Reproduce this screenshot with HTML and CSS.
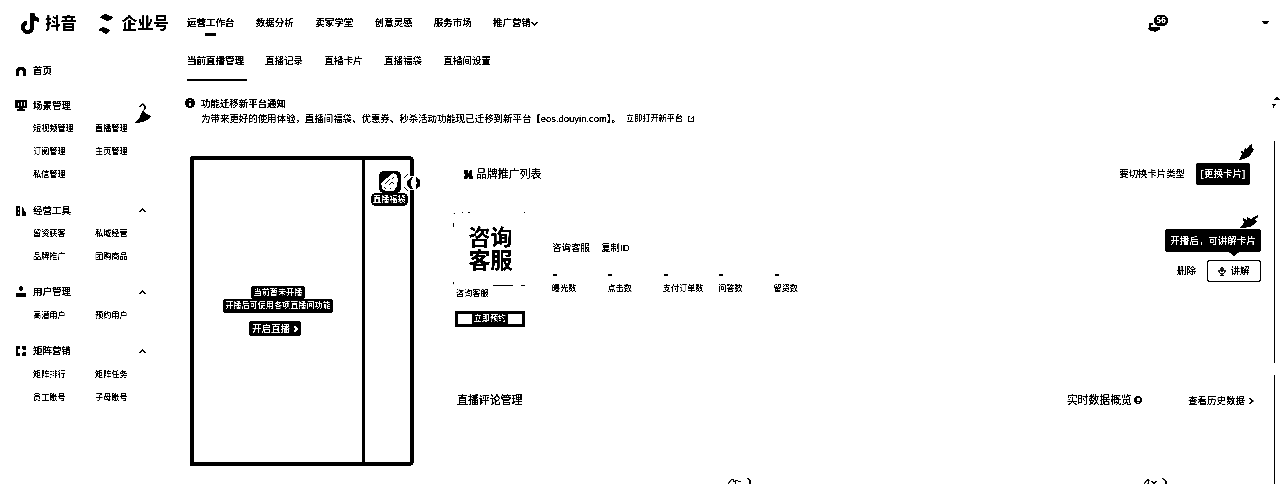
FILE: index.html
```html
<!DOCTYPE html>
<html lang="zh-CN">
<head>
<meta charset="utf-8">
<title>抖音企业号</title>
<link rel="stylesheet" href="styles.css">
</head>
<body>
<div class="app">
  <header class="header">
    <div class="brand">
      <svg class="brand-note" viewBox="0 0 19 22"><path d="M10 0h4c.3 3 2 5 5 5.300v3.700c-2 0-3.700-.6-5-1.500v7.500a7 7 0 1 1-8-7v4a3 3 0 1 0 4 3z"/></svg>
      <span class="brand-name">抖音</span>
      <svg class="brand-mark" viewBox="0 0 16 20"><path d="M2 3 7 0l8 3-1 2-5 2-6-3zM0 16l5-3 7 3-1 2-3 2-5-3z"/></svg>
      <span class="brand-name">企业号</span>
    </div>
    <nav class="nav">
      <a class="nav-item nav-active">运营工作台</a><a class="nav-item">数据分析</a><a class="nav-item">卖家学堂</a><a class="nav-item">创意灵感</a><a class="nav-item">服务市场</a><a class="nav-item">推广营销<svg class="nav-arrow" viewBox="0 0 7 5"><path d="m.5 1 3 3 3-3"/></svg></a>
    </nav>
    <div class="bell">
      <svg class="bell-icon" viewBox="0 0 12 10"><path d="M1 1h4v2H3v2h9v3h-2l-1 1H8L7 10 5 9H3L0 7l1-2z"/></svg>
      <span class="bell-count">56</span>
    </div>
    <svg class="account-arrow" viewBox="0 0 7 4"><path d="M0 0h7L5 3H2z"/></svg>
  </header>
  <div class="layout">
    <aside class="sidebar">
      <div class="group group-home">
        <div class="group-title"><svg class="side-icon" viewBox="0 0 12 12"><path d="M1 11V5l3-3h4l3 3v6H8V6L7 5H5L4 6v5z"/></svg>首页</div>
      </div>
      <div class="group">
        <div class="group-title"><svg class="side-icon" viewBox="0 0 12 12"><path d="M0 0h12v8H8v1h2v2H2V9h2V8H0z"/><path class="cut" d="M3.500 3v3M6.500 2v4M9.500 2v4"/></svg>场景管理</div>
        <div class="links"><a>短视频管理</a><a>直播管理</a><a>订阅管理</a><a>主页管理</a><a>私信管理</a></div>
        <svg class="pointer pointer-side" viewBox="0 0 16 22"><path d="m0 21 4-4 4-9 3 4 5 2-2 3-6 3z"/><path class="line" d="M5 5V4l3-2 2 2v2l-1 2"/></svg>
      </div>
      <div class="group">
        <div class="group-title"><svg class="side-icon" viewBox="0 0 12 12"><path d="M1 1h4v10H1zM7 2h1l1 4 2 2v3H7z"/><path class="cut" d="M3.500 3v2M3.500 7v2"/></svg>经营工具<svg class="fold" viewBox="0 0 7 5"><path d="m.5 4 3-3 3 3"/></svg></div>
        <div class="links"><a>留资获客</a><a>私域经营</a><a>品牌推广</a><a>团购商品</a></div>
      </div>
      <div class="group">
        <div class="group-title"><svg class="side-icon" viewBox="0 0 12 12"><circle cx="6" cy="2.500" r="2.200"/><path d="M1 7h10v4H1z"/></svg>用户管理<svg class="fold" viewBox="0 0 7 5"><path d="m.5 4 3-3 3 3"/></svg></div>
        <div class="links"><a>高潜用户</a><a>预约用户</a></div>
      </div>
      <div class="group">
        <div class="group-title"><svg class="side-icon" viewBox="0 0 12 12"><path d="M1 1h4v3H3v4h2v3H1zM7 1h4v4H8V4H7zM7 8h1V7h3v4H7z"/></svg>矩阵营销<svg class="fold" viewBox="0 0 7 5"><path d="m.5 4 3-3 3 3"/></svg></div>
        <div class="links"><a>矩阵排行</a><a>矩阵任务</a><a>员工账号</a><a>子母账号</a></div>
      </div>
    </aside>
    <main class="main">
      <div class="tabs"><a class="tab tab-active">当前直播管理</a><a class="tab">直播记录</a><a class="tab">直播卡片</a><a class="tab">直播福袋</a><a class="tab">直播间设置</a></div>
      <section class="notice">
        <svg class="notice-icon" viewBox="0 0 10 10"><circle cx="5" cy="5" r="5"/><path class="cut" d="M5 2v1.500M5 4.500V8"/></svg>
        <div>
          <div class="notice-line notice-title">功能迁移新平台通知</div>
          <div class="notice-line">为带来更好的使用体验，直播间福袋、优惠券、秒杀活动功能现已迁移到新平台【eos.douyin.com】。<a class="notice-link">立即打开新平台</a><svg class="external" viewBox="0 0 8 8"><path d="M3 1.500H1.500v5h5V4M4 4l2.500-2.500V4"/></svg></div>
        </div>
      </section>
      <div class="content">
        <section class="phone">
          <div class="screen">
            <p class="halo">当前暂未开播</p>
            <p class="halo halo-wide">开播后可使用各项直播间功能</p>
            <p class="halo halo-button">开启直播<svg class="go" viewBox="0 0 5 8"><path d="m1 1 3 3-3 3"/></svg></p>
          </div>
          <div class="rail">
            <svg class="avatar" viewBox="0 0 22 22"><rect width="22" height="22" rx="5"/><path class="face" d="m2 12 7-6 5-4 4 2 1 5-1 6-3 5H7l-4-2z"/><path class="line thin" d="m6 13 5-5M10 14l3-3 2 2M5 16l2 2M11 17l1 1M13 8l2-2"/></svg>
            <span class="halo rail-label">直播福袋</span>
          </div>
          <svg class="knob" viewBox="0 0 17 20"><path class="blank" d="M6 3h6v14H6z"/><path class="line thin" d="M5 1 1 5M1 14l4 4"/><path d="M9 4 4.500 7.500v5L8 16h2l-2-4V8l2-4zM13 4l4 3v6l-4 3v-4l1-2-1-2z"/></svg>
        </section>
        <div class="panels">
          <section class="panel promo">
            <div class="promo-head">
              <svg class="promo-icon" viewBox="0 0 8 9"><path d="M0 0h4v5l2-5h2v6l1 1v2H5V6L3 9H0V7l2-2-2-2z"/></svg>
              <h2 class="title">品牌推广列表</h2>
              <span class="switch-text">要切换卡片类型</span>
              <span class="switch-button">更换卡片</span>
              <svg class="pointer pointer-top" viewBox="0 0 15 17"><path d="m0 16 3-6-1-3 3 1 1-4 2 1 3-4 2-1v4l2 1-3 5-3 3-5 2z"/></svg>
            </div>
            <div class="product">
              <div class="product-left">
                <div class="cover">咨询<br>客服</div>
                <div class="cover-name">咨询客服</div>
                <div class="reserve"><span>立即预约</span></div>
              </div>
              <div class="product-info">
                <div class="product-name"><span>咨询客服</span><span>复制ID</span></div>
                <div class="stats">
                  <div class="stat"><b></b>曝光数</div><div class="stat"><b></b>点击数</div><div class="stat"><b></b>支付订单数</div><div class="stat"><b></b>问答数</div><div class="stat"><b></b>留资数</div>
                </div>
              </div>
              <div class="actions">
                <span>删除</span>
                <span class="explain"><svg class="mic" viewBox="0 0 8 10"><path d="M3 5V1.500h2V5zM1 4v2l2 2h2l2-2V4M2 9.500h4"/></svg>讲解</span>
                <span class="tip">开播后，可讲解卡片</span>
                <svg class="pointer pointer-tip" viewBox="0 0 18 14"><path d="m0 13 4-5-1-5 4 2V2l4 2 7-4v2l-4 3 3 1-4 4-3 2z"/></svg>
              </div>
            </div>
          </section>
          <section class="panel lower">
            <h2 class="title title-strong">直播评论管理</h2>
            <h2 class="title data-title">实时数据概览</h2>
            <svg class="help" viewBox="0 0 8 8"><circle cx="4" cy="4" r="3.800"/><path class="cut" d="M3 2.500h2.500V4H4v1M4 6v1"/></svg>
            <a class="history">查看历史数据<svg class="more" viewBox="0 0 5 8"><path d="m.5 1 3.500 3-3.500 3"/></svg></a>
            <svg class="empty empty-left" viewBox="0 0 24 8"><path d="m1 7 3-4 2-1 1 3 3-2 2 2 2-1M8 7l1-2M20 1l3 2v5"/></svg>
            <svg class="empty empty-right" viewBox="0 0 24 8"><path d="m1 7 3-4 2 0-1 4M8 4l3 2 3-2M11 6v2M19 1l4 3v4"/></svg>
          </section>
        </div>
      </div>
      <svg class="sort" viewBox="0 0 8 12"><path d="m2 3 3-3 3 3zM0 7h4L2 9v2H1V9z"/></svg>
    </main>
  </div>
</div>
</body>
</html>
```
FILE: styles.css
```css
* { box-sizing: border-box; }
html { background: #fff; }
body { margin: 0; width: 1280px; height: 484px; overflow: hidden; background: #fff; }
svg { display: block; flex: none; overflow: visible; }
p, h2 { margin: 0; font-weight: 400; }
.app {
  width: 1280px; height: 484px; overflow: hidden;
  background: #fff; color: #000;
  font: 9.5px/12px "Liberation Sans", "Noto Sans CJK SC", sans-serif;
  white-space: nowrap;
  filter: grayscale(1) brightness(.78) contrast(12);
}
.line { fill: none; stroke: #000; stroke-width: 1.2; }
.cut { fill: none; stroke: #fff; stroke-width: 1.7; }
.thin { stroke-width: 1; }
.blank { fill: #fff; }

.header { display: flex; align-items: center; height: 46px; padding-left: 21px; position: relative; }
.brand { display: flex; align-items: center; width: 166px; font-size: 15.8px; line-height: 24px; font-weight: 700; color: #222; padding-top: 1px; }
.brand-note { width: 18px; height: 21px; margin-right: 6px; }
.brand-name { flex: none; }
.brand-mark { width: 16px; height: 20px; margin: 0 8px 0 21px; }
.nav { display: flex; gap: 21.3px; height: 46px; align-items: center; font-weight: 500; }
.nav-item { display: flex; align-items: center; position: relative; }
.nav-active { font-weight: 700; }
.nav-active::after { content: ""; position: absolute; left: 18px; top: 16px; width: 11px; height: 3px; border-radius: 1px; background: #000; }
.nav-arrow { width: 7px; height: 5px; }
.nav-arrow path, .fold path, .more path { fill: none; stroke: #000; stroke-width: 1.2; }
.bell { position: relative; margin-left: auto; width: 20px; height: 17px; padding-top: 7px; }
.bell-icon { width: 12px; height: 10px; }
.bell-count { position: absolute; left: 6px; top: 0; width: 14px; height: 11px; border-radius: 6px; background: #000; color: #fff; font-size: 9px; line-height: 11px; font-weight: 700; text-align: center; }
.account-arrow { width: 7px; height: 4px; margin: 0 11px 0 94px; }

.layout { display: flex; }
.sidebar { width: 187px; padding: 13px 0 0 15px; }
.group { position: relative; margin-bottom: 12.2px; }
.group-home { margin-bottom: 11px; }
.group-title { display: flex; align-items: center; height: 24px; width: 131px; font-weight: 500; }
.side-icon { width: 12px; height: 12px; margin-right: 6px; }
.fold { width: 7px; height: 5px; margin-left: auto; }
.links { display: grid; grid-template-columns: 62px 62px; grid-auto-rows: 22.8px; align-items: center; padding-left: 18px; font-size: 8.15px; }
.pointer { position: absolute; }
.pointer-side { left: 120px; top: 8px; width: 16px; height: 22px; }

.main { flex: 1; position: relative; min-width: 0; }
.tabs { display: flex; gap: 21.500px; height: 35px; padding-top: 9px; }
.tab { height: 26px; }
.tab-active { width: 60px; margin-right: -3.500px; border-bottom: 2px solid #000; font-weight: 700; }
.notice { display: flex; align-items: flex-start; gap: 6px; padding-top: 15px; margin-left: -2px; height: 75px; }
.notice-icon { width: 10px; height: 10px; margin-top: 2px; }
.notice-line { display: flex; align-items: center; height: 15px; font-size: 9.45px; }
.notice-title { font-weight: 500; }
.notice-link { font-size: 8.15px; margin-left: 5px; }
.external { width: 8px; height: 8px; margin-left: 4px; }
.external path, .mic path, .empty path { fill: none; stroke: #000; stroke-width: 1; }
.mic path { stroke-width: .8; }
.sort { position: absolute; right: 0; top: 51px; width: 8px; height: 12px; }

.content { display: flex; gap: 39px; height: 328px; margin-top: -15px; padding-left: 3px; }
.phone { position: relative; display: flex; width: 224px; height: 310px; margin-top: 15px; border: 4px solid #000; border-radius: 3px 5px 5px 0; }
.screen { width: 168px; display: flex; flex-direction: column; align-items: center; padding-top: 126px; }
.halo { background: #000; color: #fff; border-radius: 3px; font-size: 8.15px; line-height: 13px; padding: 0 3px; font-weight: 700; }
.halo-wide { line-height: 14px; padding: 0 2px; }
.halo-button { display: flex; align-items: center; gap: 3px; margin: 8px 6px 0 0; font-size: 9.5px; line-height: 15px; }
.go { width: 5px; height: 8px; }
.go path { fill: none; stroke: #fff; stroke-width: 2; }
.rail { display: flex; flex-direction: column; align-items: center; flex: 1; border-left: 3px solid #000; padding: 11px 0 0 4px; }
.avatar { width: 22px; height: 22px; }
.face { fill: #fff; }
.rail-label { width: 37px; height: 13px; border-radius: 5px; padding: 0 2px; }
.knob { position: absolute; right: -10px; top: 13px; width: 17px; height: 20px; }

.panels { flex: 1; display: flex; flex-direction: column; gap: 12px; min-width: 0; height: 343px; padding-right: 5px; }
.panel { border-right: 1px solid #000; position: relative; }
.promo { height: 222px; }
.title { font-size: 10.9px; line-height: 16px; }
.title-strong { font-weight: 500; }
.promo-head { position: relative; display: flex; align-items: center; height: 22px; margin-top: 22px; padding: 0 24px 0 11px; }
.promo-icon { width: 8px; height: 9px; margin-right: 4px; }
.switch-text { margin-left: auto; margin-right: 11px; font-size: 9.4px; }
.switch-button { width: 54px; height: 22px; border-radius: 2px; background: #000; color: #fff; line-height: 22px; text-align: center; font-weight: 700; display: flex; justify-content: center; }
.switch-button::before { content: "["; }
.switch-button::after { content: "]"; }
.pointer-top { right: 20px; top: -19px; width: 15px; height: 17px; }
.product { display: flex; position: relative; padding-top: 27px; }
.product-left { width: 99px; }
.cover { width: 74px; height: 74px; padding: 14px 0 0 1px; border-radius: 4px; background: linear-gradient(#000, #000) 40px 73px / 20px 1px no-repeat, linear-gradient(#000, #000) 68px 73px / 5px 1px no-repeat, linear-gradient(#000, #000) 0 11px / 1px 4px no-repeat, linear-gradient(#000, #000) 0 70px / 1px 4px no-repeat, linear-gradient(#000, #000) 0 0 / 2px 2px no-repeat, linear-gradient(#000, #000) 9px 0 / 1px 1px no-repeat, linear-gradient(#000, #000) 15px 0 / 2px 1px no-repeat, linear-gradient(#000, #000) 71px 0 / 1px 1px no-repeat; text-align: center; font-size: 22px; line-height: 23px; font-weight: 700; color: #222; }
.cover-name { padding-left: 3px; margin-top: 2px; font-size: 8.15px; }
.reserve { width: 70px; height: 16px; margin: 11px 0 0 2px; border: 3px solid #000; display: flex; justify-content: center; }
.reserve span { background: #000; color: #fff; font-size: 8.15px; line-height: 10px; padding: 0 2px; height: 10px; font-weight: 700; }
.product-info { padding-top: 30px; }
.product-name { display: flex; gap: 11px; }
.stats { display: grid; grid-template-columns: repeat(5, 55.4px); padding-top: 20px; font-size: 8.15px; }
.stat b { display: block; width: 4px; height: 2px; margin: 0 0 7px 1px; background: #000; }
.actions { position: absolute; right: 13px; top: 75px; display: flex; align-items: center; gap: 11px; height: 22px; }
.explain { width: 54px; height: 22px; border: 1px solid #000; border-radius: 3px; display: flex; align-items: center; justify-content: center; gap: 4px; }
.mic { width: 8px; height: 10px; }
.tip { position: absolute; right: 0; top: -31px; width: 96px; height: 23px; border-radius: 3px; background: #000; color: #fff; text-align: center; line-height: 23px; font-weight: 700; }
.tip::after { content: ""; position: absolute; left: 64px; top: 23px; border: 5px solid transparent; border-top: 4px solid #000; border-bottom: 0; }
.pointer-tip { right: 3px; top: -45px; width: 18px; height: 14px; }
.lower { height: 109px; display: flex; align-items: flex-start; padding: 17px 20px 0 4px; }
.data-title { margin-left: auto; }
.help { width: 8px; height: 8px; margin: 4px 46px 0 2px; }
.history { display: flex; align-items: center; gap: 4px; height: 17px; }
.more { width: 5px; height: 8px; }
.empty { position: absolute; top: 102px; width: 24px; height: 8px; }
.empty-left { left: 274px; }
.empty-right { left: 690px; }
```
